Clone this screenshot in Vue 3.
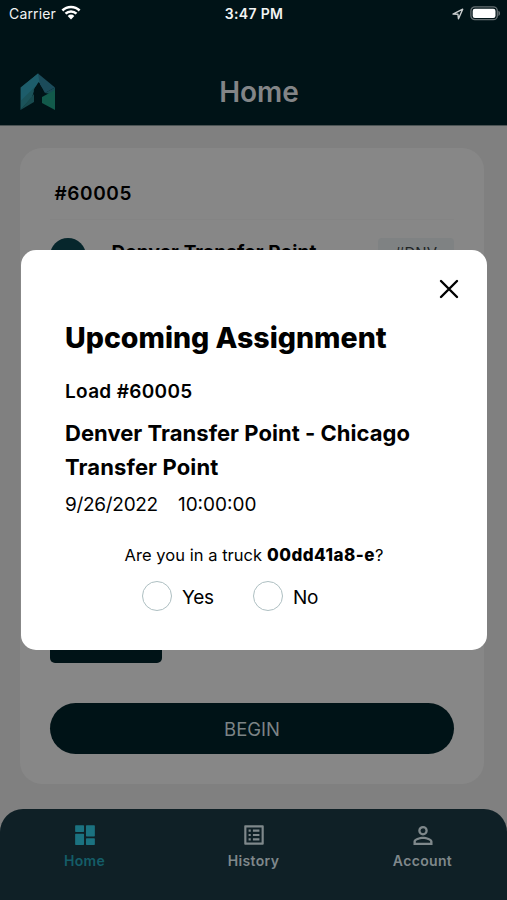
<template>
  <div class="phone">
    <header class="header">
      <div class="status-bar">
        <div class="status-left">
          <span class="carrier">Carrier</span>
          <svg class="wifi" viewBox="0 0 20 15" width="20" height="15">
            <path d="M1.4 5.5a12.2 12.2 0 0 1 17.2 0" />
            <path d="M4.5 8.7a7.8 7.8 0 0 1 11 0" />
            <path class="wifi-dot" d="M6.7 10.9a4.7 4.7 0 0 1 6.6 0L10 14.5z" />
          </svg>
        </div>
        <span class="clock">3:47 PM</span>
        <div class="status-right">
          <svg class="location" viewBox="0 0 12 12" width="12" height="12">
            <path d="M1 6.1 10.7 1.2 6.5 10.8 5.9 6.2z" />
          </svg>
          <svg class="battery" viewBox="0 0 31 15" width="31" height="15">
            <rect class="battery-case" x="0.9" y="0.9" width="26.4" height="12.8" rx="4" />
            <rect class="battery-level" x="2.7" y="2.7" width="22.8" height="9.2" rx="2.2" />
            <path class="battery-tip" d="M28.4 4.7c2.2.8 2.2 4.4 0 5.2z" />
          </svg>
        </div>
      </div>
      <div class="title-bar">
        <svg class="logo" viewBox="0 0 36 38" width="36" height="38">
          <path fill="#1b535a" d="M.5 14.5 18 .5l4 7-7 7-3 10L.5 37z" />
          <path fill="#1d5d6b" d="M18 .5 22 7 1 27.5v-13z" />
          <path fill="#184a4e" d="M.5 37 14 21v8z" />
          <path fill="#1b4b5a" d="M18 .5 35 14.5 25 20l-5-8z" />
          <path fill="#174d55" d="M25 20 35 14.5V22z" />
          <path fill="#125a4b" d="M22 24 35 17v20L22 30z" />
          <path fill="#001317" d="m18.5 9-5 8.5h2.3V23L14 24.5V31h8v-7l-.8-1v-5.5h2.3z" />
        </svg>
        <h1>Home</h1>
      </div>
    </header>

    <main class="content">
      <section class="card">
        <h2>#60005</h2>
        <div class="stop">
          <span class="stop-icon">
            <svg viewBox="0 0 12 10" width="12" height="10"><path d="M1 1h10v8H1z" /></svg>
          </span>
          <span class="stop-name">Denver Transfer Point</span>
          <span class="stop-tag">#DNV</span>
        </div>
        <div class="spacer"></div>
        <div class="small-button"></div>
        <button type="button" class="begin">BEGIN</button>
      </section>
    </main>

    <nav class="tabs">
      <div v-for="tab in tabs" :key="tab.name" class="tab" :class="{ active: tab.name === activeTab }" @click="activeTab = tab.name">
        <svg viewBox="0 0 24 24" width="26" height="26">
          <path :d="tab.icon" />
        </svg>
        <span>{{ tab.name }}</span>
      </div>
    </nav>

    <div v-if="showModal" class="overlay">
      <div class="modal">
        <button type="button" class="close" @click="showModal = false">
          <svg viewBox="0 0 20 20" width="20" height="20">
            <path d="M2 2 18 18M18 2 2 18" />
          </svg>
        </button>
        <h3>Upcoming Assignment</h3>
        <p class="load">Load #60005</p>
        <p class="route"><span class="line-one">Denver Transfer Point - Chicago</span> <span class="line-two">Transfer Point</span></p>
        <p class="date"><span class="day">9/26/2022</span><span class="time">10:00:00</span></p>
        <p class="question">Are you in a truck <b>00dd41a8-e</b>?</p>
        <div class="answers">
          <label v-for="option in options" :key="option">
            <input type="radio" v-model="answer" :value="option" />
            <span>{{ option }}</span>
          </label>
        </div>
      </div>
    </div>
  </div>
</template>

<script setup>
import { ref } from 'vue'

const activeTab = ref('Home')
const showModal = ref(true)
const answer = ref('')
const options = ['Yes', 'No']

const tabs = [
  {
    name: 'Home',
    icon: 'M3.5 3h7a.6.6 0 0 1 .6.6v5a.6.6 0 0 1-.6.6h-7a.6.6 0 0 1-.6-.6v-5a.6.6 0 0 1 .6-.6zM13.5 3h7a.6.6 0 0 1 .6.6v9.2a.6.6 0 0 1-.6.6h-7a.6.6 0 0 1-.6-.6V3.6a.6.6 0 0 1 .6-.6zM3.5 10.8h7a.6.6 0 0 1 .6.6v9.2a.6.6 0 0 1-.6.6h-7a.6.6 0 0 1-.6-.6v-9.2a.6.6 0 0 1 .6-.6zM13.5 15h7a.6.6 0 0 1 .6.6v5a.6.6 0 0 1-.6.6h-7a.6.6 0 0 1-.6-.6v-5a.6.6 0 0 1 .6-.6z'
  },
  {
    name: 'History',
    icon: 'M19 5v14H5V5h14m1.1-2H3.9c-.5 0-.9.4-.9.9v16.2c0 .4.4.9.9.9h16.2c.4 0 .9-.5.9-.9V3.9c0-.5-.5-.9-.9-.9zM11 7h6v2h-6V7zm0 4h6v2h-6v-2zm0 4h6v2h-6zM7 7h2v2H7zm0 4h2v2H7zm0 4h2v2H7z'
  },
  {
    name: 'Account',
    icon: 'M12 5.7a2.3 2.3 0 1 1 0 4.6 2.3 2.3 0 0 1 0-4.6m0 9.9c3.2 0 6.6 1.4 6.6 2.3v1.2H5.4v-1.2c0-.9 3.4-2.3 6.6-2.3M12 3.6a4.4 4.4 0 1 0 0 8.8 4.4 4.4 0 0 0 0-8.8zm0 9.9c-3 0-8.8 1.5-8.8 4.4v3.3h17.6v-3.3c0-2.9-5.8-4.4-8.8-4.4z'
  }
]
</script>

<style>
body {
  margin: 0;
}
</style>

<style scoped>
.phone {
  position: relative;
  display: flex;
  flex-direction: column;
  width: 507px;
  height: 900px;
  overflow: hidden;
  background: #808080;
  font-family: Inter, "Liberation Sans", sans-serif;
  color: #000;
}
h1, h2, h3, p {
  margin: 0;
}
svg {
  display: block;
}
button {
  border: none;
  font-family: inherit;
}

.header {
  height: 126px;
  flex: none;
  background: #001317;
  border-bottom: 1px solid #4b5354;
  box-sizing: border-box;
}
.status-bar {
  display: grid;
  grid-template-columns: 1fr auto 1fr;
  align-items: center;
  height: 27px;
  padding: 0 6px 0 9px;
  color: #f2f4f4;
  font-size: 14px;
}
.status-left,
.status-right {
  display: flex;
  align-items: center;
}
.status-left {
  gap: 5px;
}
.status-right {
  justify-content: flex-end;
  gap: 6px;
}
.carrier {
  letter-spacing: 0.15px;
}
.clock {
  margin-right: 2px;
  font-weight: 600;
  letter-spacing: 0.35px;
}
.wifi {
  fill: none;
  stroke: #fff;
  stroke-width: 2.5;
  margin-top: -3px;
}
.wifi .wifi-dot {
  fill: #fff;
  stroke: none;
}
.location {
  fill: none;
  stroke: #c9cdce;
  stroke-width: 1.4;
  stroke-linejoin: round;
}
.battery-case {
  fill: none;
  stroke: #667073;
  stroke-width: 1.3;
}
.battery-level {
  fill: #fff;
}
.battery-tip {
  fill: #667073;
}
.title-bar {
  display: grid;
  grid-template-columns: 36px 1fr 36px;
  align-items: center;
  height: 38px;
  margin-top: 46px;
  padding: 0 9px 0 20px;
}
h1 {
  text-align: center;
  font-size: 28px;
  font-weight: 600;
  line-height: 38px;
  color: #838587;
}

.content {
  flex: 1;
  padding: 22px 23px 25px 20px;
}
.card {
  display: flex;
  flex-direction: column;
  height: 636px;
  box-sizing: border-box;
  padding: 34px 30px 30px;
  border-radius: 22px;
  background: #878787;
}
h2 {
  padding: 0 0 13px 4.5px;
  border-bottom: 1px solid #848484;
  font-size: 19px;
  line-height: 24px;
  font-weight: 600;
  letter-spacing: 0.6px;
}
.stop {
  display: flex;
  align-items: flex-start;
  height: 36px;
  padding-top: 18px;
}
.stop-icon {
  display: flex;
  justify-content: center;
  padding-top: 11px;
  width: 36px;
  height: 36px;
  box-sizing: border-box;
  border-radius: 50%;
  background: #06262c;
}
.stop-icon svg {
  fill: #7d8b8d;
}
.stop-name {
  flex: 1;
  margin-left: 25.5px;
  padding-top: 3px;
  font-size: 19px;
  line-height: 24px;
  font-weight: 700;
  letter-spacing: 0.14px;
  white-space: nowrap;
}
.stop-tag {
  width: 76px;
  height: 28px;
  border-radius: 4px;
  background: #7f8283;
  color: #202526;
  text-align: center;
  font-size: 15px;
  line-height: 29px;
}
.spacer {
  flex: 1;
}
.small-button {
  width: 112px;
  height: 40px;
  margin-bottom: 40px;
  border-radius: 5px;
  background: #001317;
}
.begin {
  height: 51px;
  flex: none;
  border-radius: 26px;
  background: #001317;
  color: #7c8486;
  font-size: 18.5px;
}

.tabs {
  display: grid;
  grid-template-columns: repeat(3, 1fr);
  flex: none;
  height: 91px;
  border-radius: 23px 23px 0 0;
  background: #0f2026;
}
.tab {
  display: flex;
  flex-direction: column;
  align-items: center;
  padding-top: 13px;
  font-size: 14px;
  font-weight: 600;
  line-height: 18px;
  letter-spacing: 0.35px;
  color: #7f888b;
}
.tab span {
  margin-top: 4px;
}
.tab svg {
  fill: currentColor;
}
.tab.active {
  color: #145d68;
}
.tab.active svg {
  fill: #1b7280;
}

/* the dialog lies over the whole screen */
.overlay {
  position: absolute;
  inset: 0;
  display: flex;
  align-items: center;
  justify-content: center;
}
.modal {
  display: flex;
  flex-direction: column;
  width: 466px;
  height: 400px;
  margin-left: 1px;
  box-sizing: border-box;
  padding: 29px 28px 0 44px;
  border-radius: 15px;
  background: #fff;
}
.close {
  align-self: flex-end;
  padding: 0;
  background: none;
}
.close svg {
  fill: none;
  stroke: #000;
  stroke-width: 2.4;
  stroke-linecap: round;
}
h3 {
  margin-top: 21px;
  font-size: 28.5px;
  line-height: 36px;
  font-weight: 800;
  white-space: nowrap;
}
.load {
  margin-top: 24px;
  font-size: 19px;
  line-height: 24px;
  font-weight: 600;
  letter-spacing: 0.32px;
}
.route {
  margin-top: 12px;
  font-size: 22px;
  line-height: 34px;
  font-weight: 700;
}
.route span {
  white-space: nowrap;
}
.line-one {
  letter-spacing: 0.03px;
}
.line-two {
  letter-spacing: 0.12px;
}
.date {
  display: flex;
  gap: 20px;
  margin-top: 9px;
  font-size: 19px;
  line-height: 24px;
}
.day {
  letter-spacing: -0.3px;
}
.question {
  margin: 27px 0 0 59.5px;
  font-size: 16.5px;
  line-height: 22px;
  letter-spacing: 0.04px;
  white-space: nowrap;
}
.question b {
  font-size: 17px;
  font-weight: 800;
  letter-spacing: 0.5px;
}
.answers {
  display: flex;
  margin: 15px 0 0 77px;
}
label {
  display: flex;
  align-items: flex-start;
  gap: 10px;
  width: 111px;
  font-size: 19px;
  line-height: 30px;
  letter-spacing: -0.25px;
}
label span {
  padding-top: 2px;
}
input {
  appearance: none;
  box-sizing: border-box;
  width: 30px;
  height: 30px;
  margin: 0;
  border: 1px solid #aebfc2;
  border-radius: 50%;
}
input:checked {
  background: #062a31;
}
</style>
